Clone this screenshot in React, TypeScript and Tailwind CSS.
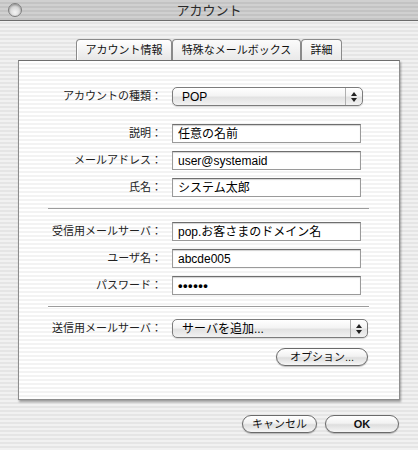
import React from "react"

const font = "font-['Liberation_Sans','Noto_Sans_CJK_JP',sans-serif]"

function Label({ children }: { children: React.ReactNode }) {
  return (
    <div className="w-[144px] shrink-0 text-right text-[11px] leading-none text-[#222] pr-[1px]">
      {children}
    </div>
  )
}

function Field({ value, dots = false }: { value: string; dots?: boolean }) {
  return (
    <div className="ml-[9px] w-[189px] h-[19px] bg-white border border-[#9a9a9a] border-t-[#6e6e6e] shadow-[inset_0_1px_1px_rgba(0,0,0,0.18)] flex items-center pl-[5px]">
      <span className={`leading-none text-black ${dots ? "text-[13px] font-bold tracking-[0.5px]" : "text-[12px]"}`}>{value}</span>
    </div>
  )
}

function Popup({ value, width }: { value: string; width: string }) {
  return (
    <div
      className={`ml-[9px] ${width} h-[19px] rounded-[5px] border border-[#7c7c7c] bg-[linear-gradient(to_bottom,#ffffff_0%,#f4f4f4_45%,#e2e2e2_55%,#f2f2f2_100%)] shadow-[0_1px_1px_rgba(0,0,0,0.15)] flex items-center`}
    >
      <span className="flex-1 pl-[9px] text-[12px] leading-none text-black">{value}</span>
      <div className="w-[17px] h-full border-l border-[#b0b0b0] flex flex-col items-center justify-center gap-[2px]">
        <svg width="6" height="4" viewBox="0 0 6 4"><path d="M3 0L6 4H0Z" fill="#222" /></svg>
        <svg width="6" height="4" viewBox="0 0 6 4"><path d="M0 0H6L3 4Z" fill="#222" /></svg>
      </div>
    </div>
  )
}

function PillButton({ children, width, className = "" }: { children: React.ReactNode; width: string; className?: string }) {
  return (
    <div
      className={`${width} h-[18px] rounded-full border border-[#6a6a6a] bg-[linear-gradient(to_bottom,#ffffff_0%,#f2f2f2_45%,#dedede_55%,#f6f6f6_100%)] shadow-[0_1px_1px_rgba(0,0,0,0.25)] flex items-center justify-center text-[11px] leading-none text-[#111] ${className}`}
    >
      {children}
    </div>
  )
}

function Tab({ label, width, active = false }: { label: string; width: string; active?: boolean }) {
  return (
    <div
      className={`${width} h-[21px] rounded-t-[4px] border border-b-0 border-[#8a8a8a] flex items-center justify-center text-[11px] leading-none text-[#111] ${
        active
          ? "bg-[linear-gradient(to_bottom,#ffffff,#e6e6e6)] shadow-[inset_1px_0_0_#ffffff]"
          : "bg-[linear-gradient(to_bottom,#fbfbfb,#e9e9e9)]"
      }`}
    >
      {label}
    </div>
  )
}

export default function App() {
  return (
    <div
      className={`w-[418px] h-[450px] overflow-hidden relative ${font} bg-[repeating-linear-gradient(to_bottom,#f1f1f1_0px,#f1f1f1_2px,#e5e5e5_2px,#e5e5e5_4px)]`}
    >
      {/* Title bar */}
      <div className="relative h-[21px] border-b border-[#6c6c6c] bg-[repeating-linear-gradient(to_bottom,#d0d0d0_0px,#d0d0d0_2px,#c3c3c3_2px,#c3c3c3_4px)] flex items-center justify-center">
        <div className="absolute left-[8px] top-[3px] w-[14px] h-[14px] rounded-full border border-[#7e7e7e] bg-[radial-gradient(circle_at_50%_70%,#f4f4f4,#bdbdbd)] shadow-[inset_0_1px_2px_rgba(0,0,0,0.3)]" />
        <span className="text-[13px] leading-none text-[#2a2a2a]">アカウント</span>
      </div>

      <div className="pt-[18px] pl-[18px]">
        {/* Tabs */}
        <div className="relative z-10 flex pl-[58px]">
          <Tab label="アカウント情報" width="w-[96px]" active />
          <Tab label="特殊なメールボックス" width="w-[129px]" />
          <Tab label="詳細" width="w-[41px]" />
        </div>

        {/* Panel */}
        <div className="w-[382px] h-[340px] border border-[#8e8e8e] border-t-[#6e6e6e] bg-[repeating-linear-gradient(to_bottom,#ffffff_0px,#ffffff_2px,#f3f3f3_2px,#f3f3f3_4px)] shadow-[1px_2px_2px_rgba(0,0,0,0.35)]">
          <div className="flex items-center mt-[26px]">
            <Label>アカウントの種類：</Label>
            <Popup value="POP" width="w-[191px]" />
          </div>

          <div className="flex flex-col gap-[8px] mt-[18px]">
            <div className="flex items-center">
              <Label>説明：</Label>
              <Field value="任意の名前" />
            </div>
            <div className="flex items-center">
              <Label>メールアドレス：</Label>
              <Field value="user@systemaid" />
            </div>
            <div className="flex items-center">
              <Label>氏名：</Label>
              <Field value="システム太郎" />
            </div>
          </div>

          <div className="ml-[29px] w-[321px] h-[2px] mt-[11px] border-t border-[#9c9c9c] border-b border-b-white" />

          <div className="flex flex-col gap-[8px] mt-[12px]">
            <div className="flex items-center">
              <Label>受信用メールサーバ：</Label>
              <Field value="pop.お客さまのドメイン名" />
            </div>
            <div className="flex items-center">
              <Label>ユーザ名：</Label>
              <Field value="abcde005" />
            </div>
            <div className="flex items-center">
              <Label>パスワード：</Label>
              <Field value="••••••" dots />
            </div>
          </div>

          <div className="ml-[29px] w-[321px] h-[2px] mt-[11px] border-t border-[#9c9c9c] border-b border-b-white" />

          <div className="flex items-center mt-[11px]">
            <Label>送信用メールサーバ：</Label>
            <Popup value="サーバを追加..." width="w-[196px]" />
          </div>

          <div className="flex justify-end pr-[31px] mt-[10px]">
            <PillButton width="w-[92px]">オプション...</PillButton>
          </div>
        </div>
      </div>

      {/* Dialog buttons */}
      <div className="flex justify-end gap-[8px] pr-[19px] mt-[15px]">
        <PillButton width="w-[75px]">キャンセル</PillButton>
        <PillButton width="w-[74px]" className="font-bold">OK</PillButton>
      </div>
    </div>
  )
}
